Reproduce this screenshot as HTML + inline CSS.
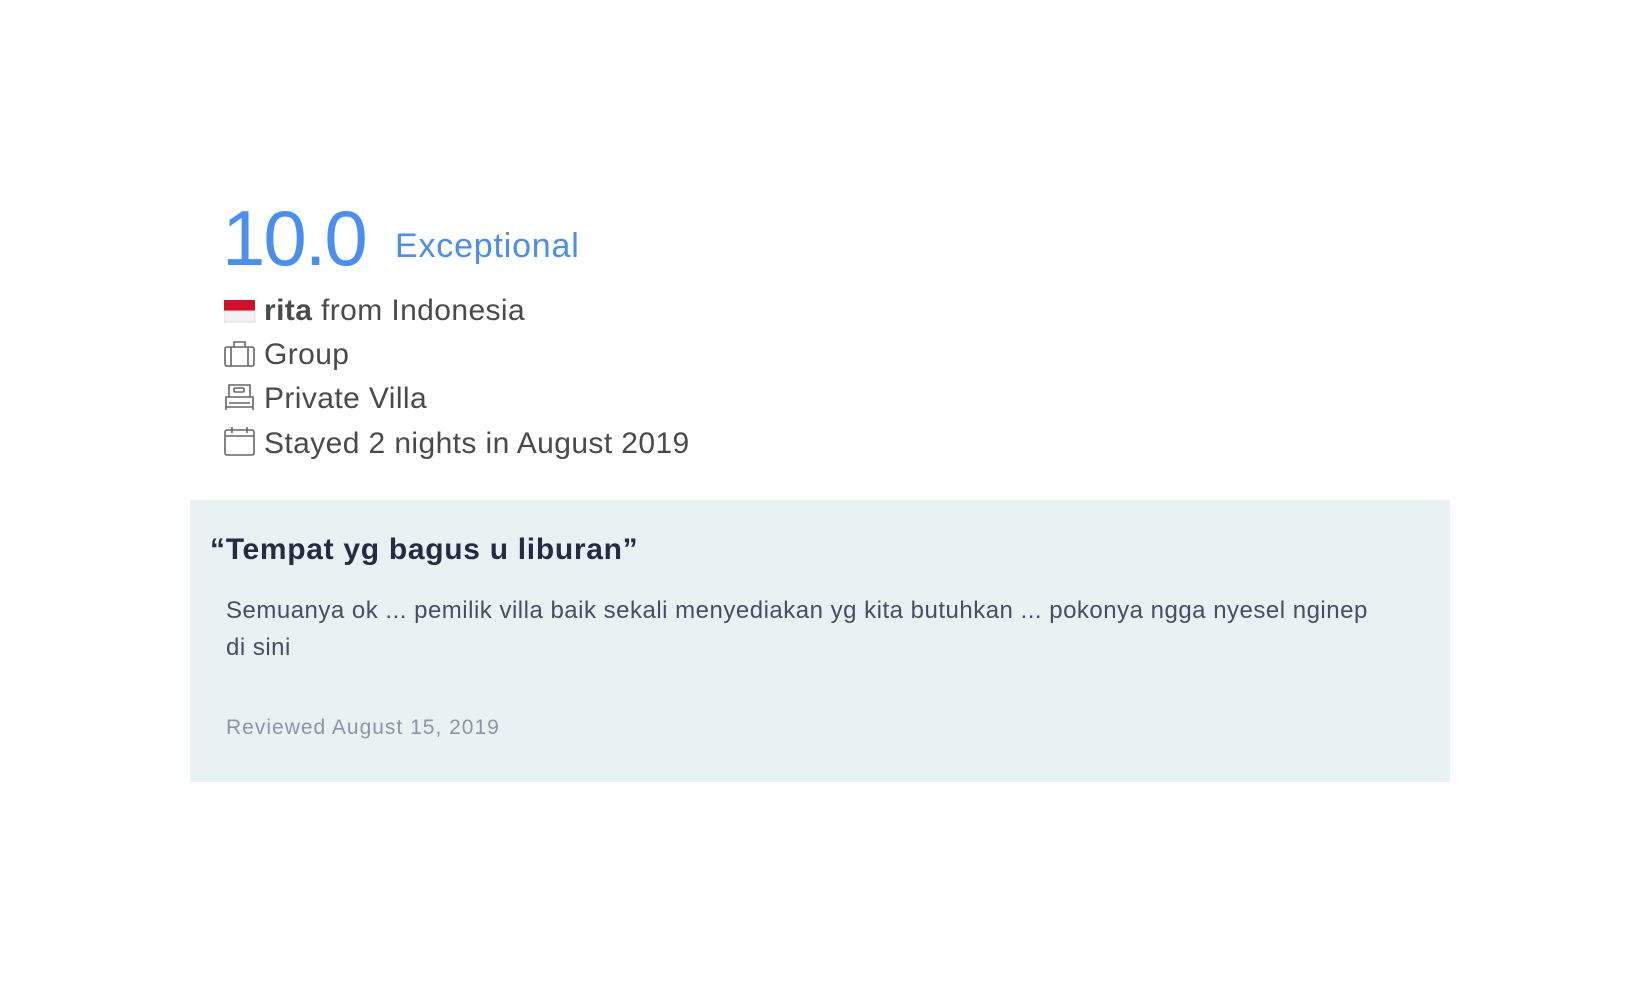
<!DOCTYPE html>
<html><head><meta charset="utf-8"><style>
body{margin:0;width:1640px;height:1000px;background:#fff;font-family:"Liberation Sans",sans-serif;position:relative;overflow:hidden}
.a{position:absolute;white-space:nowrap;line-height:1}
.row{position:absolute;left:224px;font-size:30px;color:#4a4a4a;white-space:nowrap;line-height:1;letter-spacing:0.4px}
.row svg{position:absolute;left:0}
.row span{position:absolute;left:40px;top:0}
</style></head><body>
<div class="a" style="left:222px;top:199px;font-size:78px;color:#4a8ef0;letter-spacing:-2px">10.0</div>
<div class="a" style="left:395px;top:229px;font-size:34px;color:#4a8ef0;letter-spacing:0.8px">Exceptional</div>

<div class="row" style="top:296px">
<svg width="32" height="26" viewBox="0 0 32 26" style="top:2px"><rect x="0" y="2" width="31" height="11" fill="#d0102a"/><rect x="0" y="13" width="31" height="11" fill="#f2f2f2" stroke="#ddd" stroke-width="1"/></svg>
<span><b>rita</b> from Indonesia</span></div>

<div class="row" style="top:340px">
<svg width="32" height="28" viewBox="0 0 32 28" fill="none" stroke="#666" stroke-width="1.6" style="top:0"><rect x="1" y="7" width="29" height="19" rx="2"/><path d="M10 7V2h11v5M7 7v19M24 7v19"/></svg>
<span>Group</span></div>

<div class="row" style="top:384px">
<svg width="32" height="28" viewBox="0 0 32 28" fill="none" stroke="#666" stroke-width="1.6" style="top:-1px"><path d="M5 14V2h21v12M2 14h27v10H2zM2 24v3M29 24v3M5 20h21"/><rect x="10" y="5" width="10" height="4" rx="1"/></svg>
<span>Private Villa</span></div>

<div class="row" style="top:429px">
<svg width="32" height="30" viewBox="0 0 32 30" fill="none" stroke="#666" stroke-width="1.6" style="top:-3px"><rect x="1" y="4" width="29" height="25" rx="2"/><path d="M1 10h29M8 1v6M23 1v6"/></svg>
<span>Stayed 2 nights in August 2019</span></div>

<div style="position:absolute;left:190px;top:500px;width:1260px;height:282px;background:#e8f2f3"></div>
<div class="a" style="left:210px;top:535px;font-size:30px;font-weight:bold;color:#262b44;letter-spacing:0.7px">“Tempat yg bagus u liburan”</div>
<div class="a" style="left:226px;top:599px;font-size:24px;color:#484d63;letter-spacing:0.5px">Semuanya ok ... pemilik villa baik sekali menyediakan yg kita butuhkan ... pokonya ngga nyesel nginep</div>
<div class="a" style="left:226px;top:636px;font-size:24px;color:#484d63;letter-spacing:0.5px">di sini</div>
<div class="a" style="left:226px;top:717px;font-size:21px;color:#8c95a6;letter-spacing:1px">Reviewed August 15, 2019</div>
</body></html>
